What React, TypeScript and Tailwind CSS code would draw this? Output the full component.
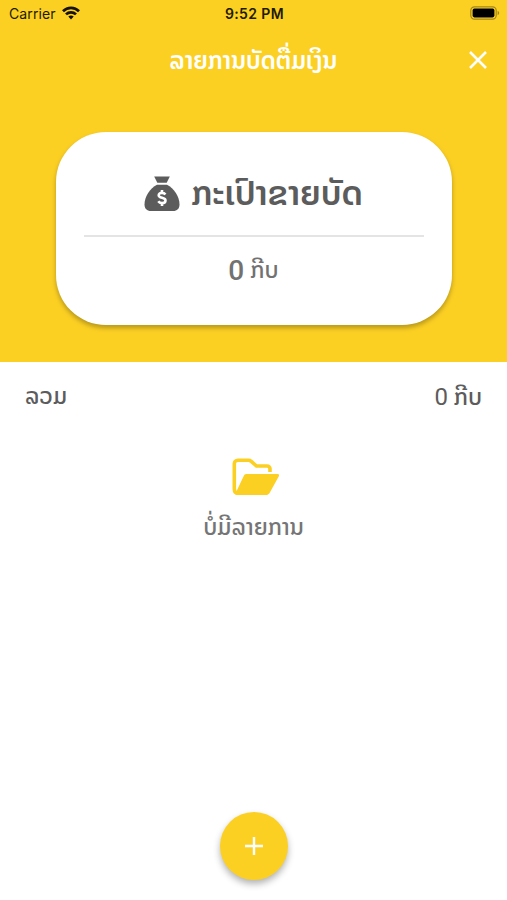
function WifiIcon() {
  return (
    <svg width="18" height="14" viewBox="0 0 18 14" fill="none" stroke="#161200" strokeWidth="2.7">
      <path d="M1 5.2C5.4 .7 12.6 .7 17 5.2" />
      <path d="M4 8.4C6.8 5.6 11.2 5.6 14 8.4" />
      <path d="M6.3 10.6C7.9 9.2 10.1 9.2 11.7 10.6L9 13.5Z" fill="#161200" stroke="none" />
    </svg>
  );
}

function BatteryIcon() {
  return (
    <svg width="30" height="14" viewBox="0 0 30 14">
      <rect x=".8" y=".8" width="25.4" height="12.4" rx="3.6" fill="none" stroke="#a3871c" strokeWidth="1.2" />
      <rect x="2.6" y="2.6" width="21.8" height="8.8" rx="1.8" fill="#000" />
      <path d="M27.6 4.8C29.7 5.6 29.7 8.4 27.6 9.2Z" fill="#a3871c" />
    </svg>
  );
}

function MoneyBagIcon() {
  return (
    <svg width="36" height="36" viewBox="0 0 36 36" fill="#5c5c5c">
      <path d="M10.2 .5H25.8L22.7 6.8H13.3Z" />
      <path d="M13 8.8H23C30 12.3 35.5 20.5 35.5 28.5C35.5 32.8 33 35 29.2 35H6.8C3 35 .5 32.8 .5 28.5C.5 20.5 6 12.3 13 8.8Z" />
      <path
        d="M21.4 18.6C20.5 17.3 19.5 16.9 18 16.9C16 16.9 14.7 17.8 14.7 19.3C14.7 22.8 21.5 20.9 21.5 24.5C21.5 26.2 20 27.1 18 27.1C16.3 27.1 15.1 26.5 14.3 25.3M18 14V17M18 27V30"
        fill="none"
        stroke="#fff"
        strokeWidth="2.6"
      />
    </svg>
  );
}

function FolderIcon() {
  return (
    <svg width="48" height="38" viewBox="0 0 48 38" fill="#fcd023">
      <path
        d="M38 14V10.8C38 9 36.8 8 35 8H24.5L19 3.2C18.3 2.5 17.5 2.3 16.5 2.3H6C3.6 2.3 2.3 3.7 2.3 6V31C2.3 33.7 3.8 35.3 6.2 35.3H10"
        fill="none"
        stroke="#fcd023"
        strokeWidth="3.6"
      />
      <path d="M14.4 16H45.2C46.9 16 47.5 17 46.7 18.5L38 34.2C37 36.1 35.9 37 33.7 37H5.2C3.7 37 3.1 35.9 3.9 34.4L11.6 18.2C12.3 16.7 13 16 14.4 16Z" />
    </svg>
  );
}

export default function App() {
  return (
    <div className="relative h-[900px] w-[507px] overflow-hidden bg-white font-['Roboto','Noto_Sans_Lao','Noto_Sans',sans-serif] text-[#5c5c5c]">
      <header className="h-[362px] bg-[#fcd023]">
        <div className="grid h-[26px] grid-cols-3 items-center pr-[7px] pl-[9px] font-['Inter',sans-serif] text-[14px] text-[#201a00]">
          <div className="flex items-center gap-1.5">
            <span className="tracking-[0.1px]">Carrier</span>
            <WifiIcon />
          </div>
          <span className="text-center font-semibold tracking-[0.4px]">9:52 PM</span>
          <div className="flex justify-end">
            <BatteryIcon />
          </div>
        </div>

        <div className="relative flex h-[66px] items-center justify-center pt-1">
          <h1 className="text-[24px] font-semibold text-white">ລາຍການບັດຕື່ມເງິນ</h1>
          <button aria-label="Close" className="absolute top-[25px] right-5">
            <svg width="18" height="18" viewBox="0 0 18 18" stroke="#fff" strokeWidth="2.5">
              <path d="M1 1L17 17M17 1L1 17" />
            </svg>
          </button>
        </div>

        <section className="mx-auto mt-10 flex h-[193px] w-[396px] flex-col rounded-[50px] bg-white px-7 shadow-[0_3px_5px_rgba(0,0,0,0.28)]">
          <div className="flex h-[105px] items-center justify-center gap-[11px] border-b-2 border-[#e4e4e4] pt-5">
            <MoneyBagIcon />
            <h2 className="pb-0.5 text-[34px] leading-none font-semibold">ກະເປົາຂາຍບັດ</h2>
          </div>
          <p className="flex h-[68px] items-center justify-center gap-1.5 text-[#727272]">
            <span className="text-[28px] font-medium">0</span>
            <span className="text-[23px] font-medium">ກີບ</span>
          </p>
        </section>
      </header>

      <div className="flex h-[71px] items-center justify-between px-[25px] text-[23px] font-medium">
        <span>ລວມ</span>
        <span>
          <span className="text-[24px] font-normal">0</span> ກີບ
        </span>
      </div>

      <main className="flex flex-col items-center pt-[25px]">
        <div className="pl-[5px]">
          <FolderIcon />
        </div>
        <p className="mt-[15px] text-[23px] font-medium text-[#757575]">ບໍ່ມີລາຍການ</p>
      </main>

      <button
        aria-label="Add"
        className="absolute top-[812px] left-[220px] grid size-[68px] place-items-center rounded-full bg-[#fcd023] shadow-[0_4px_7px_rgba(0,0,0,0.3)]"
      >
        <svg width="18" height="18" viewBox="0 0 18 18" stroke="#fff" strokeWidth="2.4">
          <path d="M9 0V18M0 9H18" />
        </svg>
      </button>
    </div>
  );
}
